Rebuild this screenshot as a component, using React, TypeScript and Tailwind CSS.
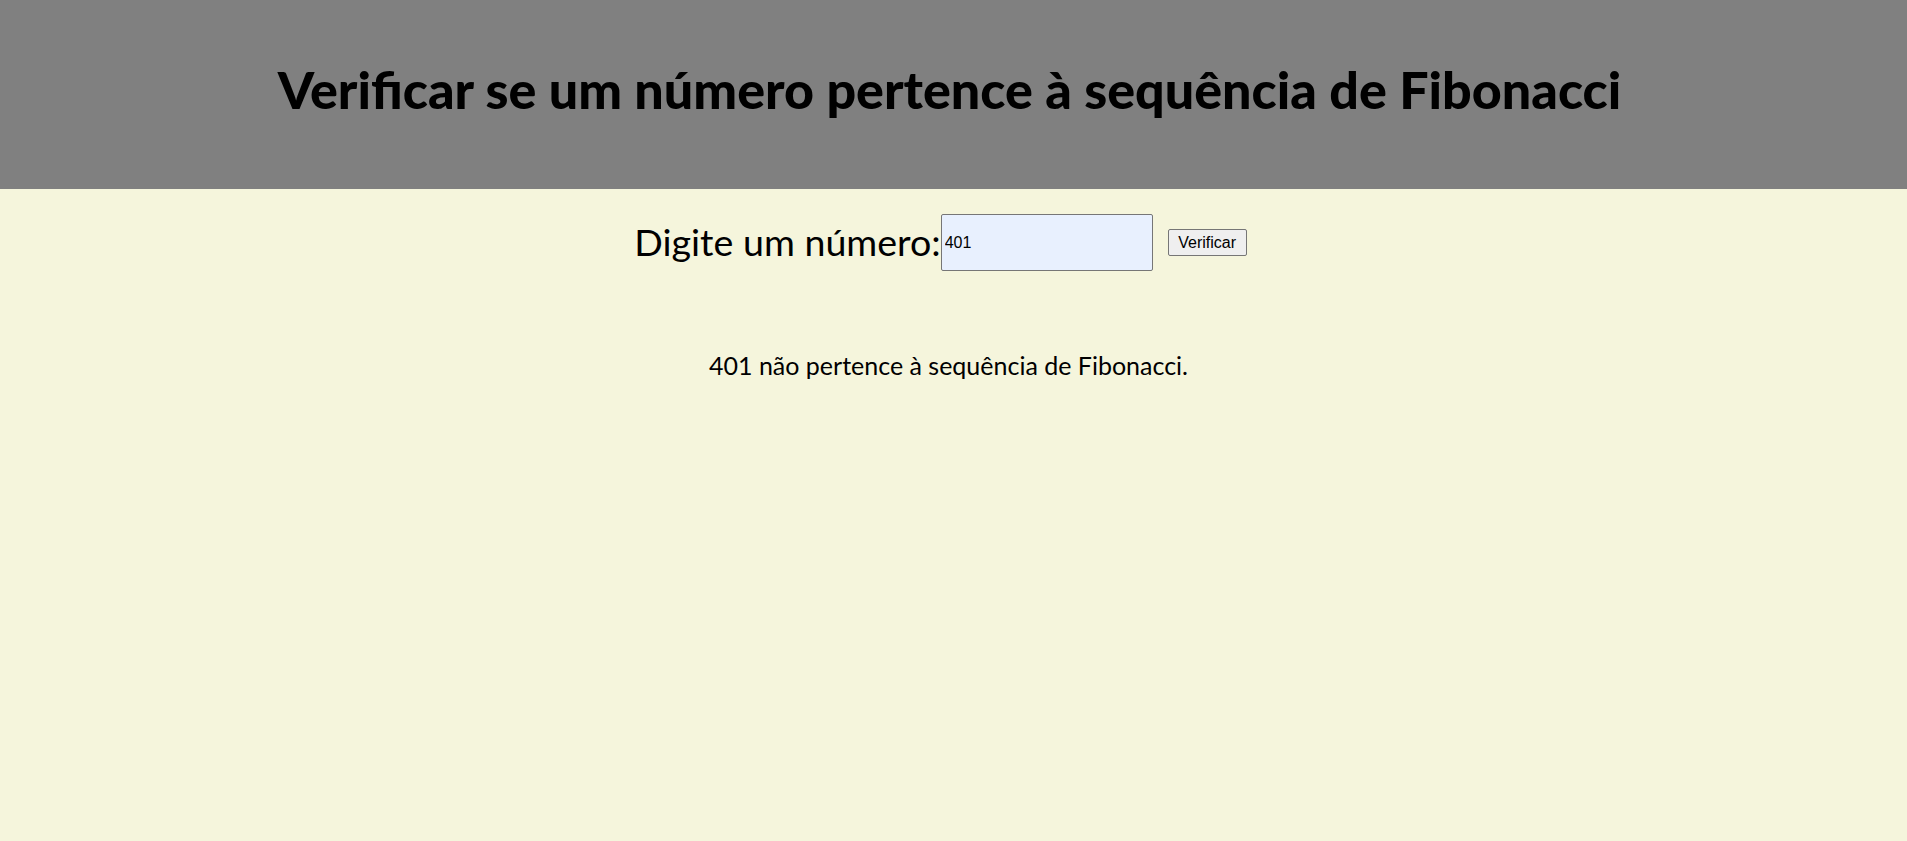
import { useState } from "react";

function isFibonacci(n: number) {
  const sq = (x: number) => {
    const s = Math.round(Math.sqrt(x));
    return s * s === x;
  };
  return sq(5 * n * n + 4) || sq(5 * n * n - 4);
}

export default function App() {
  const [value, setValue] = useState("401");
  const [result, setResult] = useState(
    "401 não pertence à sequência de Fibonacci."
  );

  const check = () => {
    const n = parseInt(value, 10);
    if (isNaN(n)) return;
    setResult(
      isFibonacci(n)
        ? `${n} pertence à sequência de Fibonacci.`
        : `${n} não pertence à sequência de Fibonacci.`
    );
  };

  return (
    <div className="min-h-[841px] w-full bg-[#f5f5dc] font-['Lato',sans-serif] text-black">
      <header className="flex h-[189px] items-center justify-center bg-[#808080] pb-[12px] pr-[8px]">
        <h1 className="text-[52px] font-black leading-none">
          Verificar se um número pertence à sequência de Fibonacci
        </h1>
      </header>

      <div className="mt-[25px] flex items-center justify-center pr-[26px]">
        <label htmlFor="numero" className="text-[37.6px] leading-tight">
          Digite um número:
        </label>
        <input
          id="numero"
          type="number"
          value={value}
          onChange={(e) => setValue(e.target.value)}
          className="h-[57px] w-[212px] rounded-[2px] border border-[#767676] bg-[#e8f0fe] px-[3px] font-['Liberation_Sans',Arial,sans-serif] text-[16px] outline-none [appearance:textfield]"
        />
        <button
          onClick={check}
          className="ml-[15px] h-[27px] w-[79px] rounded-[2px] border border-[#767676] bg-[#efefef] font-['Liberation_Sans',Arial,sans-serif] text-[16px] leading-none"
        >
          Verificar
        </button>
      </div>

      <p className="mt-[79px] pr-[10px] text-center text-[25px] leading-tight">
        {result}
      </p>
    </div>
  );
}
